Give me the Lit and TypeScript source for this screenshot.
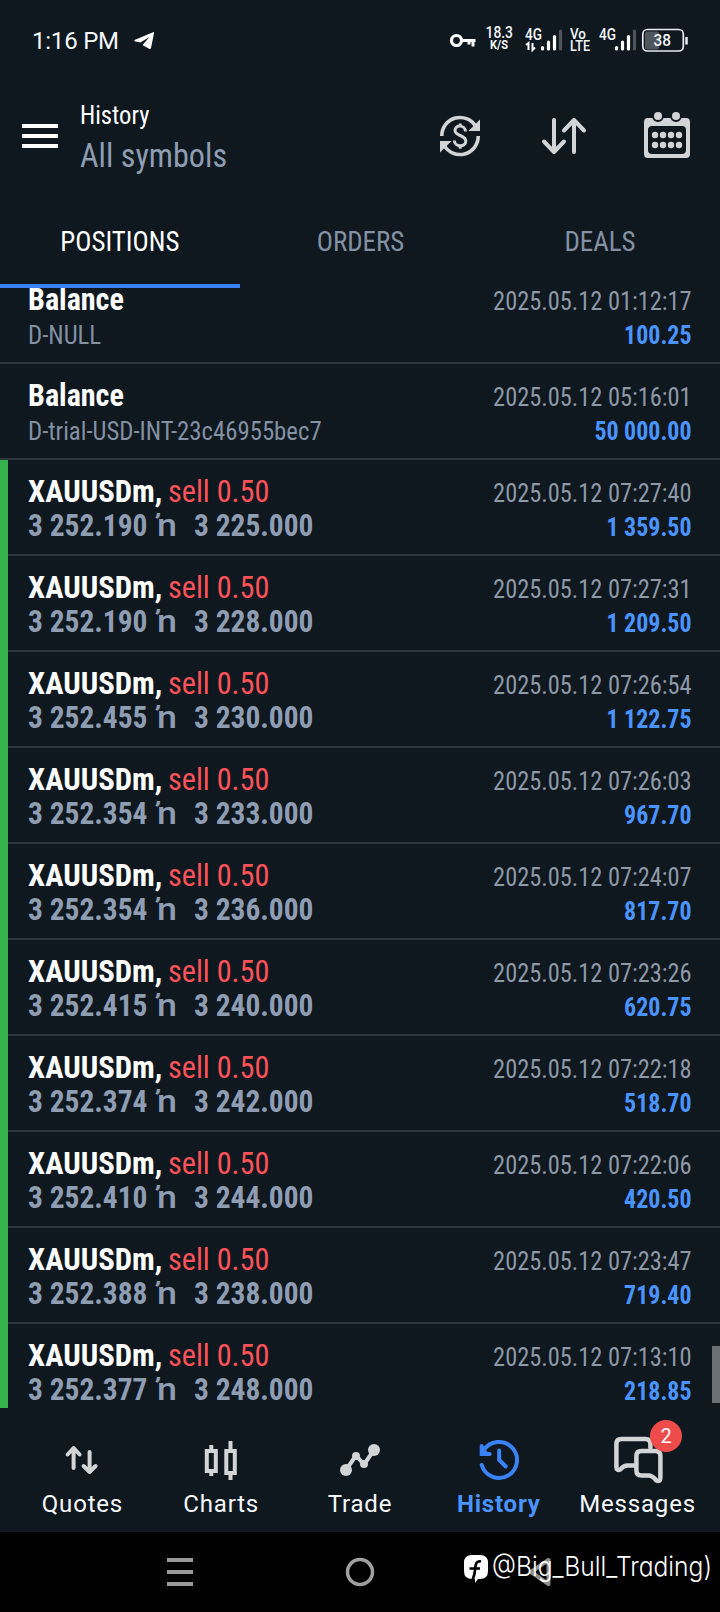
import { LitElement, html, css, svg, nothing } from "lit";
import { customElement, property } from "lit/decorators.js";

interface Deal { title: string; side?: string; open?: string; close?: string; note?: string; time: string; value: string; }

const sell = (open: string, close: string, time: string, value: string): Deal => ({
  title: "XAUUSDm,", side: "sell 0.50", open, close, time: `2025.05.12 ${time}`, value,
});

const DEALS: Deal[] = [
  { title: "Balance", note: "D-NULL", time: "2025.05.12 01:12:17", value: "100.25" },
  { title: "Balance", note: "D-trial-USD-INT-23c46955bec7", time: "2025.05.12 05:16:01", value: "50 000.00" },
  sell("3 252.190", "3 225.000", "07:27:40", "1 359.50"),
  sell("3 252.190", "3 228.000", "07:27:31", "1 209.50"),
  sell("3 252.455", "3 230.000", "07:26:54", "1 122.75"),
  sell("3 252.354", "3 233.000", "07:26:03", "967.70"),
  sell("3 252.354", "3 236.000", "07:24:07", "817.70"),
  sell("3 252.415", "3 240.000", "07:23:26", "620.75"),
  sell("3 252.374", "3 242.000", "07:22:18", "518.70"),
  sell("3 252.410", "3 244.000", "07:22:06", "420.50"),
  sell("3 252.388", "3 238.000", "07:23:47", "719.40"),
  sell("3 252.377", "3 248.000", "07:13:10", "218.85"),
];

@customElement("status-bar")
class StatusBar extends LitElement {
  static styles = css`
    :host { display: block; height: 80px; color: #f4f8fb; font-family: Roboto, sans-serif; }
    svg { display: block; }
    text { fill: currentColor; }
    .time { font-size: 24px; }
    .small { font-size: 16px; font-weight: 500; }
    .lte { font-size: 15px; font-weight: 500; }
    .tiny { font-size: 12px; font-weight: 700; }
  `;
  private bars(x: number) {
    return svg`<g stroke-width="3.2" stroke-linecap="round" stroke="#fff">
      <path d="M${x} 47.5V49"/><path d="M${x + 6} 42V49"/><path d="M${x + 12} 36.5V49"/>
      <path d="M${x + 18} 31V49" stroke="#4d545b"/></g>`;
  }
  render() {
    return html`<svg width="720" height="80" viewBox="0 0 720 80" fill="none">
      <text class="time" x="32" y="49" textLength="87">1:16 PM</text>
      <path d="M134.500 40L153 32.200Q154.300 31.800 154 33.300L151 48Q150.500 49.500 149 48.800L142.500 45L149.500 37L140.300 42.500L134.500 41.300Z" fill="#fff"/>
      <g stroke="#fff"><circle cx="456.500" cy="40.500" r="5" stroke-width="3.200"/>
      <path d="M462 40.500H475.500M473 40V46.500M469 40V44.500" stroke-width="3"/></g>
      <text class="small" x="485.500" y="38" textLength="27.500" lengthAdjust="spacingAndGlyphs">18.3</text>
      <text class="tiny" x="490" y="49" textLength="18" lengthAdjust="spacingAndGlyphs">K/S</text>
      <text class="small" x="525" y="40" textLength="17" lengthAdjust="spacingAndGlyphs">4G</text>
      <path d="M526 45L528.500 43V50M532.500 43V50L535 47.500" stroke="#fff" stroke-width="2"/>
      ${this.bars(542.5)}
      <text class="lte" x="570" y="38.500" textLength="16" lengthAdjust="spacingAndGlyphs">Vo</text>
      <text class="lte" x="570" y="51" textLength="20" lengthAdjust="spacingAndGlyphs">LTE</text>
      <text class="small" x="599" y="40" textLength="17" lengthAdjust="spacingAndGlyphs">4G</text>
      ${this.bars(616.5)}
      <rect x="645" y="31.500" width="14" height="18" rx="2" fill="#50565d"/>
      <rect x="642.800" y="29.500" width="40.500" height="21.500" rx="4.500" stroke="#e8eef2" stroke-width="1.700"/>
      <path d="M686.500 37V44.500" stroke="#e8eef2" stroke-width="2.500"/>
      <text class="small" x="653.500" y="45.500" textLength="17.500" lengthAdjust="spacingAndGlyphs">38</text>
    </svg>`;
  }
}

@customElement("page-header")
class PageHeader extends LitElement {
  static styles = css`
    :host { display: flex; align-items: center; height: 112px; padding: 0 0 0 22px; box-sizing: border-box;
      font-family: "Roboto Condensed", Roboto, sans-serif; font-stretch: 75%; }
    svg { display: block; flex: none; }
    .titles { flex: 1; margin-left: 22px; padding-top: 4px; }
    .title, .sub { transform-origin: left; }
    .title { font-size: 26px; line-height: 36px; color: #fff; transform: scaleX(0.945); }
    .sub { font-size: 33px; line-height: 46px; color: #8e9db2; transform: scaleX(0.975); }
  `;
  render() {
    return html`
      <svg width="36" height="24"><path d="M0 2H36M0 12H36M0 22H36" stroke="#fff" stroke-width="4"/></svg>
      <div class="titles"><div class="title">History</div><div class="sub">All symbols</div></div>
      <svg width="280" height="60" viewBox="440 106 280 60" fill="none" stroke="#d3d4d6">
        <g stroke-width="3.600"><path d="M441.800 136A18.200 18.200 0 0 1 476 127M478.200 136A18.200 18.200 0 0 1 444 145"/></g>
        <path d="M480 119.500V131H468.500ZM440 152.500V141H451.500Z" fill="#d3d4d6" stroke="none"/>
        <path d="M465.500 131.500C465 124.500 455 124.500 455 130.500C455 136.500 465.800 134.500 465.800 141.200C465.800 147.500 454.500 147.500 454.300 140.500M460.200 123.500V127M460.200 145V148.700" stroke-width="3"/>
        <g stroke-width="4" stroke-linecap="round" stroke-linejoin="round">
          <path d="M554 120V152M544 141.500L554 152L564 141.500M574 152V120M564 130.500L574 120L584 130.500"/></g>
        <g fill="#d3d4d6" stroke="none">
          <path fill-rule="evenodd" d="M648 118H686Q690 118 690 122V154Q690 158 686 158H648Q644 158 644 154V122Q644 118 648 118ZM652 126Q648 126 648 130V150Q648 154 652 154H682Q686 154 686 150V130Q686 126 682 126Z"/>
          <path d="M652 116a6 6 0 0 0 12 0M670 116a6 6 0 0 0 12 0" fill="#0f171f"/>
          <circle cx="658" cy="116" r="4"/><circle cx="676" cy="116" r="4"/>
          ${[655, 663, 671, 679].map((x) => svg`<circle cx=${x} cy="135" r="3.200"/><circle cx=${x} cy="145" r="3.200"/>`)}
        </g>
      </svg>`;
  }
}

@customElement("history-row")
class HistoryRow extends LitElement {
  @property({ attribute: false }) deal!: Deal;
  static styles = css`
    :host { display: flex; justify-content: space-between; flex: none; height: 96px; box-sizing: border-box;
      padding: 12px 28px 0 28px; border-bottom: 2px solid #2d353e;
      font-family: "Roboto Condensed", Roboto, sans-serif; font-stretch: 75%; }
    :host([trade]) { padding-left: 20px; }
    .line { display: flex; font-size: 32px; line-height: 38px; height: 34px; }
    .line span { flex: none; white-space: pre; transform-origin: left; }
    .title { font-weight: 700; color: #fff; width: 140px; transform: scaleX(0.957); }
    .side { color: #ff5259; transform: scaleX(0.943); }
    .prices { font-weight: 700; color: #8e9db2; }
    .price { transform: scaleX(0.92); width: 126px; }
    .prices .mark { font-family: Roboto, sans-serif; font-stretch: 100%; font-weight: 500; width: 36.5px; margin-left: 3px; transform: scaleX(1.12); }
    .title.balance { transform: scaleX(0.94); }
    .note { color: #8391a3; font-size: 26px; line-height: 42px; white-space: nowrap; transform: scaleX(0.953); transform-origin: left; }
    .right { text-align: right; font-size: 26px; line-height: 42px; }
    .right div { transform-origin: right; white-space: nowrap; height: 34px; }
    .time { color: #8e99a8; transform: scaleX(0.938); }
    .value { color: #4a94ff; font-weight: 700; transform: scaleX(0.92); }
  `;
  render() {
    const d = this.deal;
    return html`
      <div><div class="line"><span class="title ${d.side ? "" : "balance"}">${d.title}</span>${d.side ? html`<span class="side">${d.side}</span>` : nothing}</div>
      ${d.note ? html`<div class="note">${d.note}</div>`
        : html`<div class="line prices"><span class="price">${d.open}</span><span class="mark">ŉ</span><span class="price">${d.close}</span></div>`}</div>
      <div class="right"><div class="time">${d.time}</div><div class="value">${d.value}</div></div>`;
  }
}

@customElement("bottom-nav")
class BottomNav extends LitElement {
  static styles = css`
    :host { display: grid; grid-template-columns: repeat(5, 1fr); height: 124px; padding: 0 13px 0 13px; box-sizing: border-box;
      font-family: Roboto, sans-serif; font-size: 24px; letter-spacing: 0.8px; color: #f5f8fb; }
    .item { display: flex; flex-direction: column; align-items: center; position: relative; }
    svg { display: block; width: 80px; height: 64px; margin-top: 20px; fill: none; stroke: #d3d4d6; }
    .label { line-height: 28px; margin-top: -2px; }
    .active { color: #4a94ff; font-weight: 700; }
    .badge { position: absolute; left: 82px; top: 12px; width: 32px; height: 32px; border-radius: 50%; background: #ee4b4b;
      font-size: 20px; line-height: 33px; text-align: center; letter-spacing: 0; color: #fff; }
  `;
  render() {
    return html`
      <div class="item"><svg viewBox="42.400 1428 80 64" stroke-width="4" stroke-linecap="round" stroke-linejoin="round">
        <path d="M74 1468V1448M68 1454.500L74 1448L80 1454.500M90 1452V1472M84 1466L90 1472L96 1466"/></svg><span class="label">Quotes</span></div>
      <div class="item"><svg viewBox="181.200 1428 80 64" stroke-width="4">
        <path d="M207 1451H216V1471H207ZM226.500 1451H235V1473H226.500ZM211.500 1445V1451M211.500 1471V1476M230.700 1441V1451M230.700 1473V1480"/></svg><span class="label">Charts</span></div>
      <div class="item"><svg viewBox="320 1428 80 64" stroke-width="4">
        <path d="M346 1470L356 1455.500L364 1464.500L374 1450"/><g fill="#d3d4d6" stroke="none"><circle cx="346" cy="1470" r="6"/><circle cx="356" cy="1456" r="4"/><circle cx="364" cy="1464" r="4"/><circle cx="374" cy="1450" r="6"/></g></svg><span class="label">Trade</span></div>
      <div class="item active"><svg viewBox="458.800 1428 80 64" stroke-width="4">
        <g stroke="#3983f7" stroke-linecap="round"><path d="M483.500 1450.500A18 18 0 1 1 481.500 1465M481.500 1446V1454H489.500M499 1450.500V1460L505.500 1466.500"/><path d="M481 1447V1454H488Z" fill="#3983f7" stroke-width="2"/></g></svg><span class="label">History</span></div>
      <div class="item"><svg viewBox="597.600 1428 80 64" stroke-width="4.500" stroke-linejoin="round" stroke-linecap="round">
        <path d="M650 1448V1444Q650 1439 645 1439H621Q616 1439 616 1444V1467Q616 1471 620 1469.500Q623 1465.500 627 1465.500H634"/>
        <path d="M641 1451H655Q660 1451 660 1456V1478Q660 1482 656 1480.500Q652 1475.500 648 1475.500H641Q636 1475.500 636 1470.500V1456Q636 1451 641 1451Z"/></svg><span class="label">Messages</span><span class="badge">2</span></div>`;
  }
}

@customElement("system-nav")
class SystemNav extends LitElement {
  static styles = css`
    :host { display: block; height: 80px; background: #000; font-family: Inter, sans-serif; }
    svg { display: block; }
    text { font-size: 27.5px; fill: #fff; font-weight: 300; font-feature-settings: "cv11"; }
  `;
  render() {
    return html`<svg width="720" height="80" viewBox="0 1532 720 80" fill="none">
      <path d="M167 1560H193M167 1572H193M167 1584H193" stroke="#999" stroke-width="4"/>
      <circle cx="360" cy="1572" r="12.500" stroke="#a0a0a0" stroke-width="3.500"/>
      <path d="M548.500 1560V1584L531 1572Z" stroke="#8e8e8e" stroke-width="4" stroke-linejoin="round"/>
      <path d="M472 1555H480Q488 1555 488 1563V1571Q488 1579 480 1579H478L475 1583V1579H472Q464 1579 464 1571V1563Q464 1555 472 1555Z" fill="#fff"/>
      <path d="M481 1561.500C475.500 1560 475.500 1566 475 1570C474.700 1575 473.500 1577.500 472.500 1580M469.500 1568.500H480" stroke="#000" stroke-width="2.700"/>
      <text x="492" y="1575.500" textLength="220" lengthAdjust="spacingAndGlyphs">@Big_Bull_Trading)</text>
    </svg>`;
  }
}

@customElement("app-root")
class AppRoot extends LitElement {
  static styles = css`
    :host { display: flex; flex-direction: column; width: 720px; height: 1612px; background: #0f171f; overflow: hidden; }
    .tabs { display: grid; grid-template-columns: repeat(3, 1fr); height: 96px; flex: none; text-align: center; color: #8391a3;
      font: 28px/32px "Roboto Condensed", Roboto, sans-serif; font-stretch: 75%; }
    .tab { padding-top: 34px; box-sizing: border-box; }
    .tab span { display: inline-block; transform: scaleX(0.962); }
    .selected { color: #fff; border-bottom: 4px solid #3983f7; }
    .list { position: relative; height: 1120px; flex: none; overflow: hidden; display: flex; flex-direction: column; justify-content: flex-end; }
    .rows { display: flex; flex-direction: column; margin-bottom: -12px; }
    .trades { border-left: 8px solid #35b34a; }
    .thumb { position: absolute; right: 0; top: 1058px; width: 8px; height: 57px; background: #6b7075; }
  `;
  render() {
    return html`<status-bar></status-bar><page-header></page-header>
      <div class="tabs"><div class="tab selected"><span>POSITIONS</span></div><div class="tab"><span>ORDERS</span></div><div class="tab"><span>DEALS</span></div></div>
      <div class="list">
        <div class="rows">${DEALS.filter((d) => !d.side).map((d) => html`<history-row .deal=${d}></history-row>`)}
          <div class="trades">${DEALS.filter((d) => d.side).map((d) => html`<history-row trade .deal=${d}></history-row>`)}</div></div>
        <div class="thumb"></div>
      </div>
      <bottom-nav></bottom-nav><system-nav></system-nav>`;
  }
}
